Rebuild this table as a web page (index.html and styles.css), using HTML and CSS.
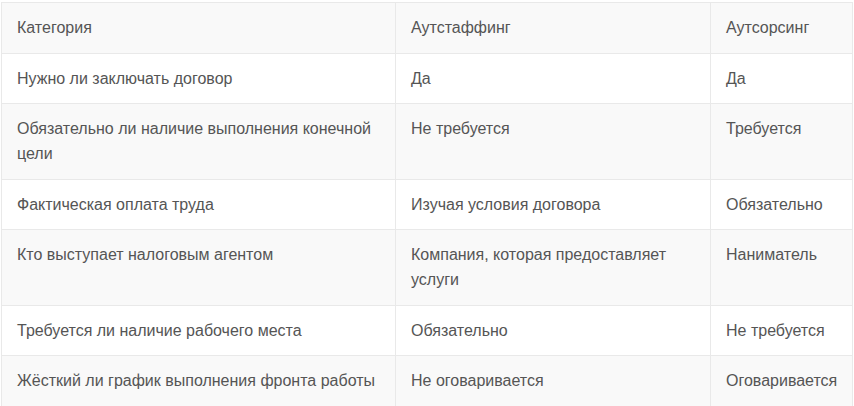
FILE: index.html
```html
<!DOCTYPE html>
<html lang="ru">
<head>
<meta charset="utf-8">
<link rel="stylesheet" href="styles.css">
</head>
<body>
<div class="wrap">
<table class="cmp">
<colgroup><col class="c1"><col class="c2"><col class="c3"></colgroup>
<thead>
<tr><th>Категория</th><th>Аутстаффинг</th><th>Аутсорсинг</th></tr>
</thead>
<tbody>
<tr><td>Нужно ли заключать договор</td><td>Да</td><td>Да</td></tr>
<tr><td>Обязательно ли наличие выполнения конечной цели</td><td>Не требуется</td><td>Требуется</td></tr>
<tr><td>Фактическая оплата труда</td><td>Изучая условия договора</td><td>Обязательно</td></tr>
<tr><td>Кто выступает налоговым агентом</td><td>Компания, которая предоставляет услуги</td><td>Наниматель</td></tr>
<tr><td>Требуется ли наличие рабочего места</td><td>Обязательно</td><td>Не требуется</td></tr>
<tr><td>Жёсткий ли график выполнения фронта работы</td><td>Не оговаривается</td><td>Оговаривается</td></tr>
</tbody>
</table>
</div>
</body>
</html>
```
FILE: styles.css
```css
html, body { margin: 0; padding: 0; background: #fff; }
.wrap { padding: 2px 0 0 1px; }
.cmp {
  border-collapse: collapse;
  width: 851px;
  table-layout: fixed;
  font-family: "Liberation Sans", Arial, sans-serif;
  font-size: 16px;
  line-height: 25px;
  color: #555;
}
.c1 { width: 394px; }
.c2 { width: 315px; }
.c3 { width: 142px; }
.cmp th, .cmp td {
  border: 1px solid #e9e9e9;
  padding: 12.25px 15px;
  text-align: left;
  vertical-align: top;
  font-weight: normal;
}
.cmp thead tr { background: #f9f9f9; }
.cmp tbody tr:nth-child(even) { background: #f9f9f9; }
```
